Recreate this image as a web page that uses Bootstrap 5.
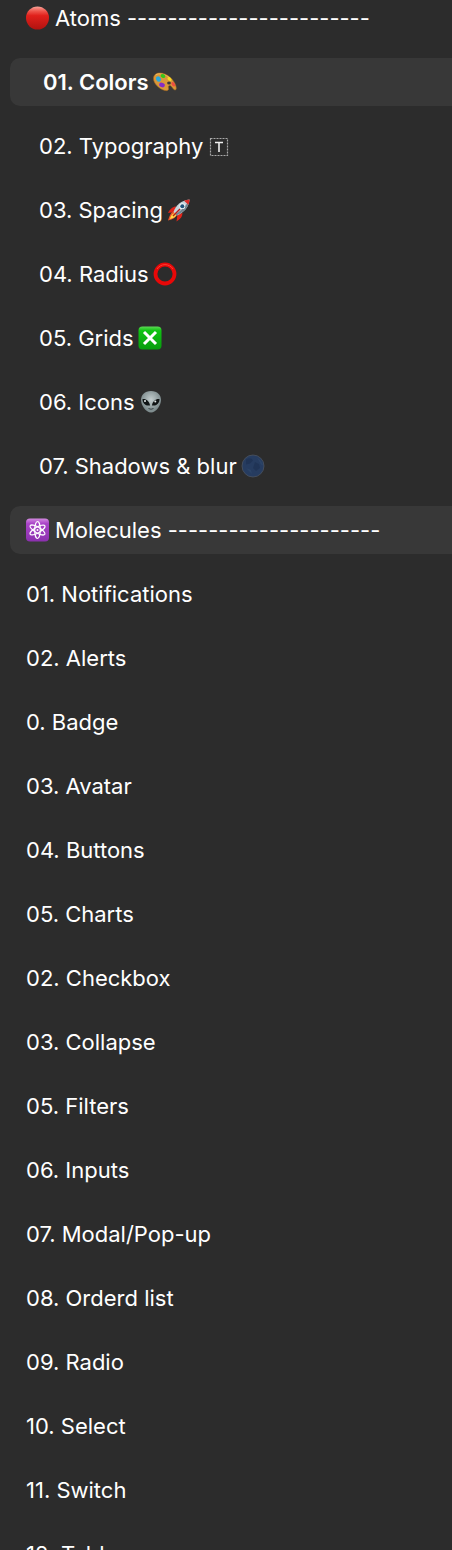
<!DOCTYPE html>
<html lang="en">
<head>
<meta charset="utf-8">
<meta name="viewport" content="width=device-width, initial-scale=1">
<title>Pages</title>
<link href="https://cdn.jsdelivr.net/npm/bootstrap@5.3.0/dist/css/bootstrap.min.css" rel="stylesheet">
<style>
  body { background: #2c2c2c; font-family: Inter, sans-serif; }
  .page-list { margin-top: -6px; padding-left: 10px; }
  .page-row {
    height: 48px; padding-left: 16px; color: #fff;
    font-size: 22px; line-height: 32px; white-space: pre;
    border-radius: 10px 0 0 10px;
  }
  .page-row:hover, .page-row.lit { background: #383838; color: #fff; }
  .page-row.sub { padding-left: 29px; }
  .page-row.current { padding-left: 33px; font-weight: 600; background: #383838; }
  .emo { width: 24px; height: 24px; flex: none; }
  .emo-end { margin-left: 4px; }
  .emo-start { margin-right: 5px; }
</style>
</head>
<body>
<nav class="vh-100 overflow-hidden" aria-label="Pages">
  <div class="page-list d-flex flex-column gap-3">
    <a href="#" class="page-row d-flex align-items-center text-decoration-none"><svg class="emo emo-start" viewBox="0 0 24 24" aria-hidden="true"><defs><linearGradient id="red" x2="0" y2="1"><stop offset="0" stop-color="#f8a49a"/><stop offset=".2" stop-color="#ee554b"/><stop offset=".4" stop-color="#e0201b"/><stop offset="1" stop-color="#b01310"/></linearGradient></defs><circle cx="11.500" cy="12" r="11.500" fill="url(#red)"/></svg>Atoms ------------------------</a>
    <a href="#" class="page-row current d-flex align-items-center text-decoration-none" aria-current="page">01. Colors<svg class="emo emo-end" viewBox="0 0 24 24" aria-hidden="true"><path d="M7 3C3 3 .5 5 .5 8.500c0 5 5.500 10.500 11.500 12 2.500.500 4-.500 3.500-2.300-.6-2 .3-3.200 2-2.500 1.800.800 2.500 4 4.500 4.300 1.300 0 1.500-1.500 1-3.500C21.500 10 14 3 7 3z" fill="#d9973a" stroke="#a86a20" stroke-width=".6"/><path d="M2.500 5C6 2.500 13 4.500 17 8" fill="none" stroke="#f0b75a" stroke-width="1"/><ellipse cx="16" cy="13" rx="1.900" ry="1.500" fill="#383838"/><ellipse cx="5.500" cy="9" rx="2.300" ry="2.900" transform="rotate(-30 5.500 9)" fill="#29a9dd"/><ellipse cx="10" cy="6" rx="2.500" ry="1.800" transform="rotate(25 10 6)" fill="#36c51c"/><ellipse cx="16.500" cy="9" rx="2.300" ry="1.500" transform="rotate(40 16.500 9)" fill="#f6dc22"/><ellipse cx="20.300" cy="14.300" rx="1.500" ry="2.500" transform="rotate(-35 20.300 14.300)" fill="#ef4d42"/><ellipse cx="9" cy="15" rx="2.900" ry="2.200" transform="rotate(20 9 15)" fill="#852bc7"/></svg></a>
    <a href="#" class="page-row sub d-flex align-items-center text-decoration-none">02. Typography<svg class="emo emo-end" viewBox="0 0 24 24" aria-hidden="true"><rect x="3.500" y="4.500" width="17" height="17" fill="none" stroke="#a8a8a8" stroke-width="1.200" stroke-dasharray="2 1"/><path d="M8 8.500h8M12 8.500v9.500" fill="none" stroke="#f0f0f0" stroke-width="1.600"/></svg></a>
    <a href="#" class="page-row sub d-flex align-items-center text-decoration-none">03. Spacing<svg class="emo emo-end" viewBox="0 0 24 24" aria-hidden="true"><path d="M9 8.500C6 8.500 3 11 1 15l7-1zM15.500 15c0 3.500-2 6-6 8.500l1-7z" fill="#df251b"/><path d="M7 13.500C4.500 14 3 16 1 22.500c5-1 8-3 9-6z" fill="#f2552a"/><path d="M7.500 15c-3 1-4 3.500-4.500 6 3.500-1 5.500-2 6.500-4z" fill="#ffda45"/><path d="M6.500 14C9 7 14 2.500 22.500 1.500 22 9 17 14.500 10 17.500z" fill="#c5d4dc"/><path d="M9.500 17.500C17 14 22 9 22.500 1.500c-3 5.500-7 10.500-14 14.500z" fill="#71838e"/><path d="M17 2.800c2-.800 3.500-1.200 5.500-1.300 0 2-.400 3.500-1.200 5.300z" fill="#df2b27"/><circle cx="15.300" cy="8.200" r="2.900" fill="#eef4f7"/><circle cx="15.300" cy="8.200" r="2" fill="#20547b"/><path d="M13 11l-7 7" stroke="#b51d1a" stroke-width="1.500"/></svg></a>
    <a href="#" class="page-row sub d-flex align-items-center text-decoration-none">04. Radius<svg class="emo emo-end" viewBox="0 0 24 24" aria-hidden="true"><circle cx="12" cy="12" r="9.500" fill="none" stroke="#e80808" stroke-width="3.800"/><path d="M4 7a9.500 9.500 0 0 1 16 0" fill="none" stroke="#ff3b32" stroke-width="1"/></svg></a>
    <a href="#" class="page-row sub d-flex align-items-center text-decoration-none">05. Grids<svg class="emo emo-end" viewBox="0 0 24 24" aria-hidden="true"><defs><linearGradient id="green" x2="0" y2="1"><stop stop-color="#5fd956"/><stop offset=".18" stop-color="#10c313"/><stop offset="1" stop-color="#079c0d"/></linearGradient></defs><rect x=".5" y=".5" width="23" height="23" rx="4" fill="url(#green)"/><path d="M6 6l12 12M18 6L6 18" stroke="#fff" stroke-width="3"/></svg></a>
    <a href="#" class="page-row sub d-flex align-items-center text-decoration-none">06. Icons<svg class="emo emo-end" viewBox="0 0 24 24" aria-hidden="true"><defs><radialGradient id="skin" cy=".4"><stop stop-color="#c3cdce"/><stop offset="1" stop-color="#7f8d8f"/></radialGradient></defs><path d="M12 1C5.500 1 2 5 2 10c0 5.500 5 12.500 10 12.500S22 15.500 22 10c0-5-3.500-9-10-9z" fill="url(#skin)"/><path d="M3.500 9c3.500-.5 7 2 7.500 6.500-4.500.700-7.500-2-7.500-6.500zM20.500 9c-3.500-.5-7 2-7.500 6.500 4.500.700 7.500-2 7.500-6.500z" fill="#101415"/><circle cx="6" cy="11" r="1" fill="#e9eeee"/><circle cx="16.300" cy="11.500" r="1" fill="#e9eeee"/><path d="M9.500 18.500q2.500 1.500 5 0" fill="none" stroke="#394244" stroke-width="1"/></svg></a>
    <a href="#" class="page-row sub d-flex align-items-center text-decoration-none">07. Shadows &amp; blur<svg class="emo emo-end" viewBox="0 0 24 24" aria-hidden="true"><circle cx="12" cy="12" r="11" fill="#263c60" stroke="#4b5360" stroke-width=".8"/><path d="M5 5.500q5-3 7 1l-3 3-4 1zM14 8l4 2 1 4-4 3-3-3z" fill="#1d2f50" opacity=".6"/><path d="M16 3.500q5 3 6 8l-2-1zM5 14l5 2 1 4z" fill="#30496d" opacity=".6"/></svg></a>

    <a href="#" class="page-row lit d-flex align-items-center text-decoration-none"><svg class="emo emo-start" viewBox="0 0 24 24" aria-hidden="true"><defs><linearGradient id="violet" x2="0" y2="1"><stop stop-color="#d58be2"/><stop offset=".22" stop-color="#a944c8"/><stop offset="1" stop-color="#8b30ae"/></linearGradient></defs><rect y=".5" width="23" height="23" rx="4" fill="url(#violet)"/><g fill="none" stroke="#fff" stroke-width="1.200"><ellipse cx="11.500" cy="12" rx="2.800" ry="8.500"/><ellipse cx="11.500" cy="12" rx="2.800" ry="8.500" transform="rotate(60 11.500 12)"/><ellipse cx="11.500" cy="12" rx="2.800" ry="8.500" transform="rotate(120 11.500 12)"/></g><circle cx="11.500" cy="12" r="1" fill="#fff"/></svg>Molecules ---------------------</a>
    <a href="#" class="page-row d-flex align-items-center text-decoration-none">01. Notifications</a>
    <a href="#" class="page-row d-flex align-items-center text-decoration-none">02. Alerts</a>
    <a href="#" class="page-row d-flex align-items-center text-decoration-none">0. Badge</a>
    <a href="#" class="page-row d-flex align-items-center text-decoration-none">03. Avatar</a>
    <a href="#" class="page-row d-flex align-items-center text-decoration-none">04. Buttons</a>
    <a href="#" class="page-row d-flex align-items-center text-decoration-none">05. Charts</a>
    <a href="#" class="page-row d-flex align-items-center text-decoration-none">02. Checkbox</a>
    <a href="#" class="page-row d-flex align-items-center text-decoration-none">03. Collapse</a>
    <a href="#" class="page-row d-flex align-items-center text-decoration-none">05. Filters</a>
    <a href="#" class="page-row d-flex align-items-center text-decoration-none">06. Inputs</a>
    <a href="#" class="page-row d-flex align-items-center text-decoration-none">07. Modal/Pop-up</a>
    <a href="#" class="page-row d-flex align-items-center text-decoration-none">08. Orderd list</a>
    <a href="#" class="page-row d-flex align-items-center text-decoration-none">09. Radio</a>
    <a href="#" class="page-row d-flex align-items-center text-decoration-none">10. Select</a>
    <a href="#" class="page-row d-flex align-items-center text-decoration-none">11. Switch</a>
    <a href="#" class="page-row d-flex align-items-center text-decoration-none">12. Table</a>
  </div>
</nav>
<script src="https://cdn.jsdelivr.net/npm/bootstrap@5.3.0/dist/js/bootstrap.bundle.min.js"></script>
</body>
</html>
